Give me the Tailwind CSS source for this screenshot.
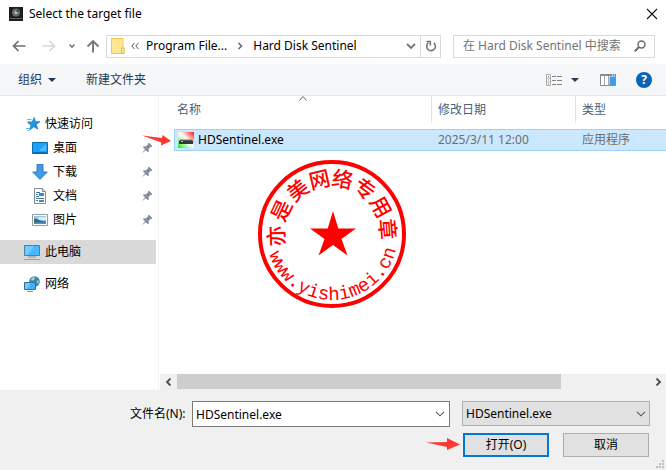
<!DOCTYPE html>
<html lang="zh-CN">
<head>
<meta charset="utf-8">
<meta name="viewport" content="width=device-width, initial-scale=1">
<title>Select the target file</title>
<script src="https://cdn.jsdelivr.net/npm/@tailwindcss/browser@4"></script>
</head>
<body class="bg-white">
<div class="relative flex h-screen flex-col overflow-hidden bg-white font-['Noto_Sans','Noto_Sans_CJK_SC',sans-serif] text-[12px] leading-4 text-black">

  <header class="flex h-7 shrink-0 items-center gap-[6px] pl-[9px] pr-2">
    <svg class="h-3.5 w-3.5" viewBox="0 0 14 14" aria-hidden="true"><path fill="#1b1e1e" d="M0 0h14v14H0z"/><circle cx="7" cy="5.500" r="4" fill="#666b6b"/><circle cx="7" cy="5.500" r="1.500" fill="#d0d4d4"/><path stroke="#222" d="M7 5.500 10.500 2"/><path stroke="#50605a" d="M1 11.500h12"/></svg>
    <h1 class="flex-1">Select the target file</h1>
    <button aria-label="Close" class="h-3 w-3"><svg viewBox="0 0 12 12" class="h-3 w-3"><path d="m1 1 10 10M11 1 1 11" stroke="#111" stroke-width="1.100"/></svg></button>
  </header>

  <nav class="flex h-9 shrink-0 items-center pl-3 pr-[11px] pt-[6px] pb-[6px]" aria-label="导航">
    <button aria-label="后退" class="w-[30px]"><svg class="h-3.5 w-3.5" viewBox="0 0 14 14" fill="none" stroke="#6e6e6e" stroke-width="1.700"><path d="M13.500 7H2M6.500 2 1.500 7l5 5"/></svg></button>
    <button aria-label="前进" class="w-[26px]"><svg class="h-3.5 w-3.5" viewBox="0 0 14 14" fill="none" stroke="#d8d8d8" stroke-width="1.700"><path d="M.5 7H12M7.500 2l5 5-5 5"/></svg></button>
    <button aria-label="最近" class="w-[18px]"><svg class="h-2 w-2" viewBox="0 0 8 8" fill="none" stroke="#777" stroke-width="1.600"><path d="m1.500 2.500 2.500 2.500 2.500-2.500"/></svg></button>
    <button aria-label="上移" class="w-5"><svg class="h-3.5 w-3.5" viewBox="0 0 14 14" fill="none" stroke="#777" stroke-width="1.900"><path d="M7 13.500V2M1.500 7.500 7 2l5.500 5.500"/></svg></button>
    <div class="flex h-[23px] flex-1 items-center border border-[#d9d9d9] pl-1">
      <svg class="h-4 w-[14px] shrink-0" viewBox="0 0 14 16" aria-hidden="true"><path d="M.5.500h11.500v9.500h1v5.500H.5z" fill="#ffe693" stroke="#edc751"/><path d="M10.500 15.500V10H13v5.500z" fill="#fff0ae" stroke="#e4b93f"/></svg>
      <svg class="ml-[6px] h-2 w-2 shrink-0" viewBox="0 0 8 8" fill="none" stroke="#555"><path d="M3.500 1 .8 4l2.700 3M7.500 1 4.800 4l2.700 3"/></svg>
      <a href="#" class="ml-[7px]">Program File...</a>
      <svg class="mx-[10px] h-2 w-[6px] shrink-0" viewBox="0 0 6 8" fill="none" stroke="#666" stroke-width="1.500"><path d="M1.500 1 4.500 4l-3 3"/></svg>
      <a href="#" class="flex-1 whitespace-nowrap">Hard Disk Sentinel</a>
      <button aria-label="历史位置" class="mr-1"><svg class="h-2 w-2.5" viewBox="0 0 10 8" fill="none" stroke="#777" stroke-width="1.900"><path d="m1 2 4 4 4-4"/></svg></button>
      <button aria-label="刷新" class="flex h-full w-5 items-center justify-center border-l border-[#d9d9d9]"><svg class="h-3 w-3" viewBox="0 0 12 12" fill="none" stroke="#777" stroke-width="1.600"><path d="M8.800 2.800A4.400 4.400 0 1 1 3.500 2.700"/><path d="M1.500 1.500h3.800v4"/></svg></button>
    </div>
    <div class="ml-3 flex h-[23px] w-[202px] items-center border border-[#d9d9d9] pl-[9px] pr-2">
      <input type="search" aria-label="搜索" placeholder="在 Hard Disk Sentinel 中搜索" class="w-0 flex-1 appearance-none bg-transparent outline-none placeholder:text-[#737373]">
      <svg class="h-3 w-3 shrink-0" viewBox="0 0 12 12" fill="none" stroke="#6b6b6b"><circle cx="7.500" cy="4.500" r="3.500" stroke-width="1.400"/><path d="M5 7 .8 11.200" stroke-width="2"/></svg>
    </div>
  </nav>

  <div role="toolbar" class="flex h-8 shrink-0 items-center border-b border-[#e7e8e9] bg-[#f5f6f7] pl-[18px] pr-[14px] text-[#1e395b]">
    <button class="flex items-center gap-[6px]">组织<svg class="h-1 w-2" viewBox="0 0 8 4"><path d="M0 0h8L4 4z" fill="#1e395b"/></svg></button>
    <button class="ml-[30px]">新建文件夹</button>
    <button aria-label="更改视图" class="ml-auto flex items-center gap-[9px]">
      <svg class="h-3 w-4" viewBox="0 0 16 12"><path d="M.5.500h4v11h-4zM.5 4h4M.5 8h4" fill="#fff" stroke="#999" stroke-width=".8"/><path d="M2 2h1v1H2z" fill="#4a8acb"/><path d="M2 5.500h1v1H2z" fill="#4c9a5f"/><path d="M2 9.500h1v1H2z" fill="#d03a3a"/><path d="M6 2.500h4m1 0h5M6 6.500h4m1 0h5M6 10.500h4m1 0h5" stroke="#808488"/></svg>
      <svg class="h-1 w-2" viewBox="0 0 8 4"><path d="M0 0h8L4 4z" fill="#1e395b"/></svg>
    </button>
    <button aria-label="预览窗格" class="ml-[21px]"><svg class="h-3 w-4" viewBox="0 0 16 12"><path d="M.5.500h15v11H.5z" fill="#fff" stroke="#898d92"/><path d="M0 0h16v2H0z" fill="#898d92"/><path d="M12 .5h1v1h-1zM14 .5h1v1h-1z" fill="#fff"/><path d="M4.500 2v9M8.500 2v9" stroke="#aaa"/><path d="M9.500 2.500h5.500v8.500H9.500z" fill="#3e9be9"/></svg></button>
    <button aria-label="帮助" class="ml-5 h-4 w-4 rounded-full bg-[#0764b5] font-bold text-white">?</button>
  </div>

  <div class="flex min-h-0 flex-1">
    <aside class="w-[159px] shrink-0 border-r border-[#f2f2f2] pt-4">
      <ul>
        <li><a href="#" class="flex h-6 items-center gap-1 pl-[25px]"><svg class="h-4 w-4" viewBox="0 0 16 16"><path d="m9.200 1.500 1.300 4.200 4.500-.2-3.700 3 1.600 4.700-4.100-2.400-3.900 2.900 1.100-4.700-3.500-2.500 4.700-.5z" fill="#2196e3" stroke="#1579bd" stroke-width=".7"/><path d="M2 3.500h4.500M3 5.500h3M1 12.500h4M2.500 14.500h2" stroke="#62b8ef"/></svg>快速访问</a></li>
        <li><a href="#" class="flex h-6 items-center gap-[5px] pl-8 pr-[5px]"><svg class="h-4 w-4" viewBox="0 0 16 16"><path d="M.5 2.500h15v11H.5z" fill="#1ea1f9" stroke="#116daa"/><path d="M1 12h14v1.500H1z" fill="#0870b8"/><path d="m7 11 7-7v7z" fill="#52b9ff"/></svg><span class="flex-1">桌面</span><svg class="h-3 w-3" viewBox="0 0 12 12"><path d="M7 1.500 8 .8 11.300 4l-.7.900-1 .1-1.900 2 .1 2.500-1 .7-2-2-3.800 3.100 3-4-2.100-2 .7-.9L5 4.300l2-1.900z" fill="#858e99"/></svg></a></li>
        <li><a href="#" class="flex h-6 items-center gap-[5px] pl-8 pr-[5px]"><svg class="h-4 w-4" viewBox="0 0 16 16"><path d="M5 .5h6V8h4.300L8 15.500.700 8H5z" fill="#4299e8" stroke="#2f70bb" stroke-width=".9"/></svg><span class="flex-1">下载</span><svg class="h-3 w-3" viewBox="0 0 12 12"><path d="M7 1.500 8 .8 11.300 4l-.7.900-1 .1-1.900 2 .1 2.500-1 .7-2-2-3.800 3.100 3-4-2.100-2 .7-.9L5 4.300l2-1.900z" fill="#858e99"/></svg></a></li>
        <li><a href="#" class="flex h-6 items-center gap-[5px] pl-8 pr-[5px]"><svg class="h-4 w-4" viewBox="0 0 16 16"><path d="M2.500.500h8l3 3v12h-11z" fill="#fff" stroke="#858a8f"/><path d="M10.500.500v3h3" fill="#ddd" stroke="#858a8f"/><path d="M4 4.500h4M4 6.500h2M4 8.500h3M4 10.500h8M4 12.500h2" stroke="#3d79a7"/><path d="M7 5h5v3H7z" fill="#398bc1"/><path d="M7 12h5v2H7z" fill="#5c8799"/></svg><span class="flex-1">文档</span><svg class="h-3 w-3" viewBox="0 0 12 12"><path d="M7 1.500 8 .8 11.300 4l-.7.900-1 .1-1.900 2 .1 2.500-1 .7-2-2-3.800 3.100 3-4-2.100-2 .7-.9L5 4.300l2-1.900z" fill="#858e99"/></svg></a></li>
        <li><a href="#" class="flex h-6 items-center gap-[5px] pl-8 pr-[5px]"><svg class="h-4 w-4" viewBox="0 0 16 16"><path d="M.5 2.500h15v11H.5z" fill="#fff" stroke="#969a9e"/><path d="M2 4h12v8H2z" fill="#8fc5f5"/><path d="M6 5.500c3-1 5 0 8-.5v3H7z" fill="#d9edfc"/><path d="M2 6.500c4 0 6 3 12 3V11H2z" fill="#3d6b62"/><path d="M2 11c4-2 8 0 12-1v2H2z" fill="#4c8fc4"/></svg><span class="flex-1">图片</span><svg class="h-3 w-3" viewBox="0 0 12 12"><path d="M7 1.500 8 .8 11.300 4l-.7.900-1 .1-1.900 2 .1 2.500-1 .7-2-2-3.800 3.100 3-4-2.100-2 .7-.9L5 4.300l2-1.900z" fill="#858e99"/></svg></a></li>
        <li class="mr-0.5 mt-2 bg-[#d9d9d9]"><a href="#" aria-current="true" class="flex h-6 items-center gap-[5px] pl-6"><svg class="h-4 w-4" viewBox="0 0 16 16"><path d="M.5 1.500h15v10H.5z" fill="#45b8ff" stroke="#4381a8"/><path d="M1 2h9L4 11H1z" fill="#70ccff"/><path d="M4 13h8" stroke="#7795a9"/><path d="M0 15.500h16" stroke="#8ba3b4"/></svg>此电脑</a></li>
        <li class="mt-2"><a href="#" class="flex h-6 items-center gap-[5px] pl-6"><svg class="h-4 w-4" viewBox="0 0 16 16"><circle cx="10.500" cy="5.500" r="5.300" fill="#3f86a8"/><path d="M7 3.500C8 1.500 9.500 1 11 1.200L10 4l-2 .8z" fill="#a9d4df"/><path d="m12.500 5 2-1 .5 2.500-1.800 1.500z" fill="#8cc0d2"/><path d="M.5 6.500h11v7H.5z" fill="#42b2fc" stroke="#316f98"/><path d="M1 7h6l-4 6H1z" fill="#73caff"/><path d="M3 15.500h6" stroke="#7894a6"/></svg>网络</a></li>
      </ul>
    </aside>

    <main class="flex min-w-0 flex-1 flex-col pl-px">
      <div class="relative min-h-0 flex-1 overflow-hidden pl-[14px]">
        <table class="w-full table-fixed border-separate border-spacing-0 text-left">
          <colgroup><col><col class="w-36"><col class="w-[91px]"></colgroup>
          <thead class="text-[#4c607a]">
            <tr>
              <th scope="col" class="p-0 pb-[6px] font-normal"><div class="relative flex h-[27px] items-center pl-[3px]">名称<svg class="absolute left-1/2 top-0 h-[5px] w-2 -translate-x-1/2" viewBox="0 0 8 5" fill="none" stroke="#666"><path d="m.5 4.500 3.500-4 3.500 4"/></svg></div></th>
              <th scope="col" class="p-0 pb-[6px] font-normal"><div class="flex h-[27px] items-center border-l border-[#e5e5e5] pl-[6px]">修改日期</div></th>
              <th scope="col" class="p-0 pb-[6px] font-normal"><div class="flex h-[27px] items-center border-l border-[#e5e5e5] pl-[6px]">类型</div></th>
            </tr>
          </thead>
          <tbody>
            <tr class="bg-[#cce8ff] text-[#6d6d6d]">
              <td class="h-[22px] border-y border-l border-[#99d1ff] p-0 pl-[3px] text-black"><div class="flex items-center gap-1"><svg class="h-4 w-4" viewBox="0 0 16 16" aria-hidden="true"><defs><linearGradient id="disk-status" x1="0" y1="1" x2="1" y2="0"><stop offset="0" stop-color="#16ec20"/><stop offset=".45" stop-color="#edffed"/><stop offset=".58" stop-color="#fff1ed"/><stop offset="1" stop-color="#ff1313"/></linearGradient></defs><path d="M0 0h16v16H0z" fill="url(#disk-status)"/><path d="M2 8h12l1 1v3H1V9z" fill="#33383a"/><path d="M2 8h12" stroke="#777"/><path d="M3 9h2v1H3z" fill="#4ef445"/></svg>HDSentinel.exe</div></td>
              <td class="border-y border-[#99d1ff] p-0 pl-[7px]">2025/3/11 12:00</td>
              <td class="border-y border-[#99d1ff] p-0 pl-[7px]">应用程序</td>
            </tr>
          </tbody>
        </table>
      </div>
      <div class="flex h-[15px] shrink-0 bg-[#f0f0f0]">
        <button aria-label="向左滚动" class="flex w-[17px] items-center justify-center"><svg class="h-2 w-[7px]" viewBox="0 0 7 8" fill="none" stroke="#505050" stroke-width="1.900"><path d="M5.500.500 2 4l3.500 3.500"/></svg></button>
        <div class="flex-1"><div class="h-full w-[81%] bg-[#cdcdcd]"></div></div>
        <button aria-label="向右滚动" class="flex w-[15px] items-center justify-center"><svg class="h-2 w-[7px]" viewBox="0 0 7 8" fill="none" stroke="#505050" stroke-width="1.900"><path d="M1.500.500 5 4 1.500 7.500"/></svg></button>
      </div>
      <div class="h-px shrink-0 bg-[#f0f0f0]"></div>
    </main>
  </div>

  <footer class="relative h-20 shrink-0 bg-[#f0f0f0] pl-[130px] pr-4 pt-[11px]">
    <div class="flex items-start">
      <label for="filename" class="w-[62px] shrink-0 pt-[5px]">文件名(N):</label>
      <div class="flex h-[26px] min-w-0 flex-1 items-center border border-[#7a7a7a] bg-white pl-[3px] pr-1">
        <input id="filename" value="HDSentinel.exe" class="w-0 flex-1 bg-transparent pt-px outline-none">
        <button aria-label="显示文件名列表"><svg class="h-[6px] w-2.5" viewBox="0 0 10 6" fill="none" stroke="#555" stroke-width="1.100"><path d="m1 .800 4 4 4-4"/></svg></button>
      </div>
      <div class="relative ml-3 w-[188px]">
        <select aria-label="文件类型" class="h-[25px] w-full appearance-none border border-[#adadad] bg-[#e1e1e1] pl-[3px] pr-5"><option>HDSentinel.exe</option></select>
        <svg class="pointer-events-none absolute right-1 top-[10px] h-[6px] w-2.5" viewBox="0 0 10 6" fill="none" stroke="#555" stroke-width="1.100"><path d="m1 .800 4 4 4-4"/></svg>
      </div>
    </div>
    <div class="mt-[6px] flex justify-end gap-[14px] pr-px">
      <button class="h-6 w-[86px] border-2 border-[#0078d7] bg-[#e1e1e1]">打开(O)</button>
      <button class="h-6 w-[86px] border border-[#adadad] bg-[#e1e1e1]">取消</button>
    </div>
    <svg class="absolute bottom-[2px] right-[2px] h-2 w-2" viewBox="0 0 8 8" fill="#bfbfbf" aria-hidden="true"><path d="M6 0h2v2H6zM3 3h2v2H3zM6 3h2v2H6zM0 6h2v2H0zM3 6h2v2H3zM6 6h2v2H6z"/></svg>
    <svg class="absolute right-[206px] top-[47px] h-[14px] w-[34px]" viewBox="0 0 34 14" aria-hidden="true"><path d="M0 5.500 21 5V1l13 6.500L21 13v-3z" fill="#fb3a33"/></svg>
  </footer>

  <svg class="pointer-events-none absolute left-[142px] top-[134px] h-3 w-[29px]" viewBox="0 0 29 12" aria-hidden="true"><path d="M0 1.500 20 4l.5-3L29 7l-10 4.500.3-3z" fill="#fb3a33"/></svg>

  <svg class="pointer-events-none absolute left-[257px] top-[159px] h-[150px] w-[150px]" viewBox="-75 -75 150 150" fill="#ff0000" text-anchor="middle">
    <circle r="72" fill="none" stroke="#ff0000" stroke-width="4"/>
    <path d="m1-23 5.300 17.500H24L9.500 5l6 16.500L1 11l-14.500 10.500 6-16.500L-22-5.500H-4.300z"/>
    <g class="font-['Noto_Sans_CJK_SC',sans-serif] text-[21px] font-medium">
      <text y="-48" transform="rotate(-92)">亦</text>
      <text y="-48" transform="rotate(-65)">是</text>
      <text y="-48" transform="rotate(-38)">美</text>
      <text y="-48" transform="rotate(-13)">网</text>
      <text y="-48" transform="rotate(11)">络</text>
      <text y="-48" transform="rotate(36)">专</text>
      <text y="-48" transform="rotate(61)">用</text>
      <text y="-48" transform="rotate(85)">章</text>
    </g>
    <path id="seal-arc" d="M-66-12V0A66 66 0 0 0 66 0V-12" fill="none"/>
    <text class="font-['Liberation_Mono',monospace] text-[19px]"><textPath href="#seal-arc" startOffset="51%">www.yishimei.cn</textPath></text>
  </svg>
</div>
</body>
</html>
